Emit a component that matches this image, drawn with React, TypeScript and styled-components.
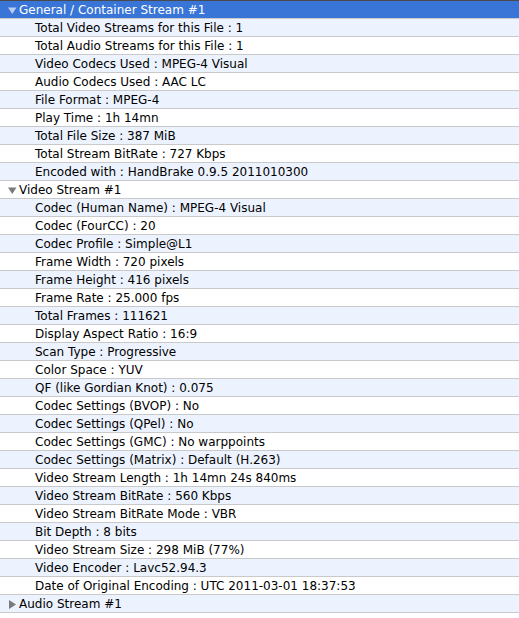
import React from 'react';
import styled, { createGlobalStyle } from 'styled-components';

const GlobalStyle = createGlobalStyle`
  html, body {
    margin: 0;
    padding: 0;
    background: #ffffff;
  }
  body {
    font-family: 'DejaVu Sans', 'Liberation Sans', sans-serif;
  }
`;

type Section = {
  title: string;
  open: boolean;
  items: string[];
};

const sections: Section[] = [
  {
    title: 'General / Container Stream #1',
    open: true,
    items: [
      'Total Video Streams for this File : 1',
      'Total Audio Streams for this File : 1',
      'Video Codecs Used : MPEG-4 Visual',
      'Audio Codecs Used : AAC LC',
      'File Format : MPEG-4',
      'Play Time : 1h 14mn',
      'Total File Size : 387 MiB',
      'Total Stream BitRate : 727 Kbps',
      'Encoded with : HandBrake 0.9.5 2011010300',
    ],
  },
  {
    title: 'Video Stream #1',
    open: true,
    items: [
      'Codec (Human Name) : MPEG-4 Visual',
      'Codec (FourCC) : 20',
      'Codec Profile : Simple@L1',
      'Frame Width : 720 pixels',
      'Frame Height : 416 pixels',
      'Frame Rate : 25.000 fps',
      'Total Frames : 111621',
      'Display Aspect Ratio : 16:9',
      'Scan Type : Progressive',
      'Color Space : YUV',
      'QF (like Gordian Knot) : 0.075',
      'Codec Settings (BVOP) : No',
      'Codec Settings (QPel) : No',
      'Codec Settings (GMC) : No warppoints',
      'Codec Settings (Matrix) : Default (H.263)',
      'Video Stream Length : 1h 14mn 24s 840ms',
      'Video Stream BitRate : 560 Kbps',
      'Video Stream BitRate Mode : VBR',
      'Bit Depth : 8 bits',
      'Video Stream Size : 298 MiB (77%)',
      'Video Encoder : Lavc52.94.3',
      'Date of Original Encoding : UTC 2011-03-01 18:37:53',
    ],
  },
  {
    title: 'Audio Stream #1',
    open: false,
    items: [],
  },
];

const Outline = styled.div`
  border-top: 1px solid #4a4a4a;
  display: flex;
  flex-direction: column;
`;

const Row = styled.div<{ $stripe: boolean; $selected?: boolean; $child?: boolean }>`
  display: flex;
  align-items: center;
  box-sizing: border-box;
  height: 18px;
  padding-top: 2px;
  border-bottom: 1px solid #c9c9c9;
  padding-left: ${(p) => (p.$child ? '35px' : '8px')};
  background: ${(p) => (p.$selected ? '#3875d7' : p.$stripe ? '#edf3fe' : '#ffffff')};
  color: ${(p) => (p.$selected ? '#ffffff' : '#000000')};
  font-size: 12px;
  white-space: nowrap;
  overflow: hidden;
`;

const Disclosure = styled.svg`
  width: 9px;
  height: 9px;
  margin-right: 2px;
  flex: none;
`;

const Label = styled.span`
  line-height: 15px;
`;

const Triangle = ({ open, selected }: { open: boolean; selected: boolean }) => (
  <Disclosure viewBox="0 0 9 9">
    {open ? (
      <polygon points="0,1.5 8.5,1.5 4.25,8" fill={selected ? '#b9cdef' : '#7a7a7a'} />
    ) : (
      <polygon points="1,0 8,4.5 1,9" fill={selected ? '#b9cdef' : '#7a7a7a'} />
    )}
  </Disclosure>
);

const App = () => {
  let index = 0;
  const rows: React.ReactNode[] = [];
  sections.forEach((section, s) => {
    const selected = s === 0;
    const headerIndex = index++;
    rows.push(
      <Row key={`h${s}`} $stripe={headerIndex % 2 === 1} $selected={selected}>
        <Triangle open={section.open} selected={selected} />
        <Label>{section.title}</Label>
      </Row>
    );
    if (section.open) {
      section.items.forEach((item, i) => {
        const rowIndex = index++;
        rows.push(
          <Row key={`r${s}-${i}`} $stripe={rowIndex % 2 === 1} $child>
            <Label>{item}</Label>
          </Row>
        );
      });
    }
  });

  return (
    <>
      <GlobalStyle />
      <Outline>{rows}</Outline>
    </>
  );
};

export default App;
